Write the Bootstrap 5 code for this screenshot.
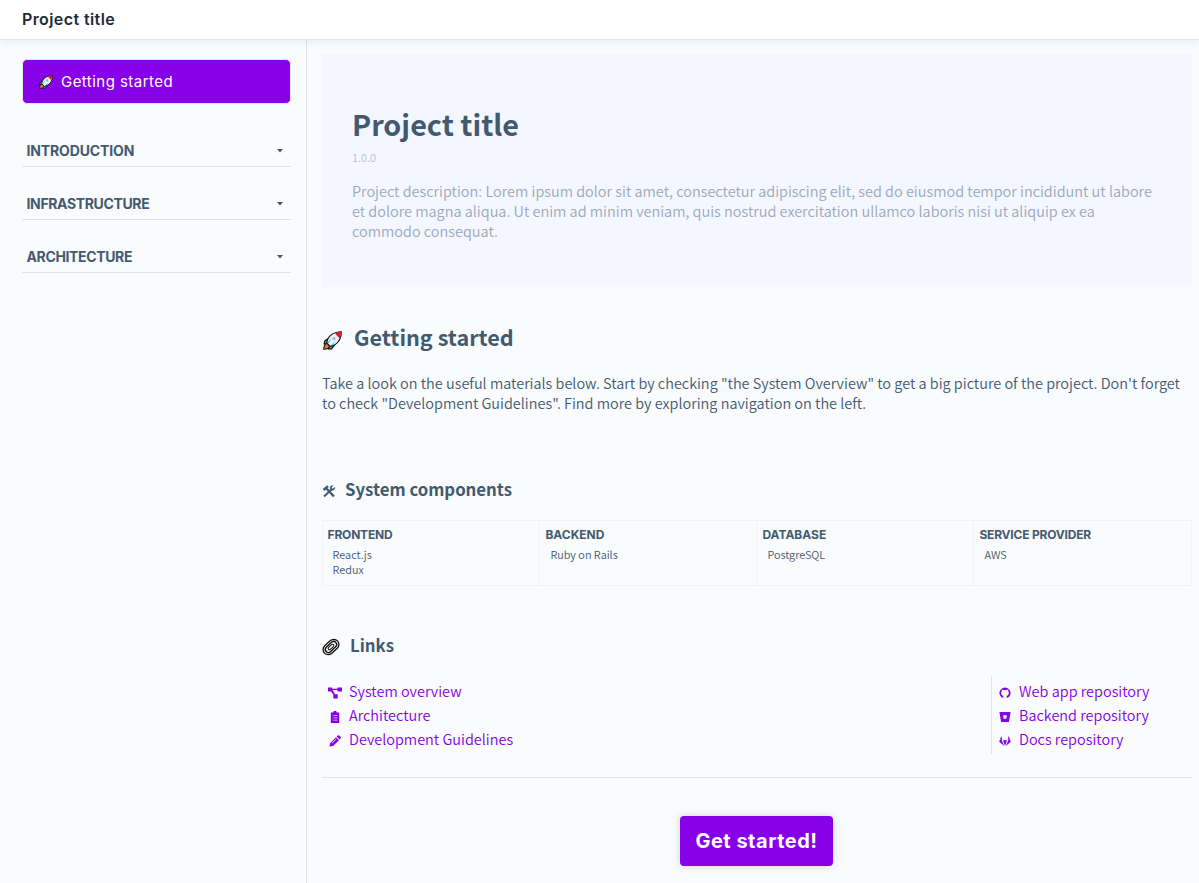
<!DOCTYPE html>
<html lang="en">
<head>
<meta charset="utf-8">
<meta name="viewport" content="width=device-width, initial-scale=1">
<title>Project title</title>
<link href="https://cdn.jsdelivr.net/npm/bootstrap@5.3.0/dist/css/bootstrap.min.css" rel="stylesheet">
<style>
:root{--ink:#425a70;--violet:#8600e8;--line:#dde3eb}
body{font-family:"Noto Sans CJK JP","Open Sans",sans-serif;font-size:14.48px;font-weight:350;line-height:20px;color:var(--ink);background:#fafbfd;height:883px;overflow:hidden}
.topbar{height:40px;background:#fff;border-bottom:1px solid #dfe3e8;box-shadow:0 1px 8px rgba(60,70,90,.1);padding:0 22px;position:relative;z-index:2}
.display-font{font-family:Inter,"Noto Sans",sans-serif}
.brand-name{font-size:16px;font-weight:600;color:#1d2c3c;line-height:38px;letter-spacing:.4px}
.page-body{height:843px}
.sidebar{width:307px;border-right:1px solid #d8e0e9;padding:19px 15px 0 22px}
.start-link{height:45px;border:1px solid #e3e3f4;border-radius:5px;background:var(--violet);color:#fff;font-size:15px;font-weight:400;letter-spacing:.46px;padding:0 15px;gap:8px}
.section-nav{margin-top:36px}
.section-row{height:27px;margin-bottom:26px;border-bottom:1px solid var(--line);padding:0 8px 5px 4.5px;font-size:14px;font-weight:700;line-height:20px;letter-spacing:-.36px}
.section-row:first-child{letter-spacing:-.14px}
.main-area{min-width:0;padding:14px 7px 0 15px}
.hero{height:233px;background:#f4f7ff;padding:50px 30px 0}
.hero h1{font-size:28.75px;font-weight:700;line-height:40px;margin:0}
.version{font-size:11px;line-height:16px;color:#b6c0ce;margin:5px 0 16px}
.hero .summary{color:#9ba9b9;margin:0}
h2,h3{font-weight:700;margin:0}
h2{font-size:21.6px;line-height:30px;margin-top:35px;gap:10px}
h3{font-size:16.75px;line-height:24px}
.lead-in{margin:21px 0 0}
.parts-title{margin-top:64px;gap:9px}
.links-title{margin-top:47px;gap:10px}
.title-icon{margin-top:3px}
.stack-grid{border:1px solid #f0f2f7;margin-top:19px!important}
.stack-grid>div{height:64px;padding:6px 5px 0 4.6px;line-height:15px;font-size:10.87px}
.stack-grid>div:not(:last-child){border-right:1px solid #f0f2f7}
.stack-grid>div+div{padding-left:5.4px}
.stack-grid b{display:block;font-size:12px;line-height:16px;margin-bottom:4px}
.stack-grid .tight{letter-spacing:-.2px}
.stack-grid span{display:block;padding-left:5px}
.link-cols{margin-top:19px}
.link-list{padding:2.5px 0 0 6px}
.link-list a{display:flex;align-items:center;height:24px;color:var(--violet);text-decoration:none}
.link-list svg{fill:currentColor;margin:4px 7px 0 0}
.repo-links{width:201px;height:78px;border-left:1px solid var(--line);padding-left:7px}
.repo-links svg{margin-right:8px}
.divider{margin-top:23px;border-top:1px solid var(--line)}
.cta-row{padding-right:2px}
.cta{width:153px;height:50px;margin-top:38px;border:0;border-radius:4px;background:var(--violet);color:#fff;font-size:20px;font-weight:700;letter-spacing:.5px;box-shadow:0 0 9px rgba(50,60,90,.2);padding:0 0 0 1px}
</style>
</head>
<body>
<svg width="0" height="0" class="position-absolute" aria-hidden="true">
<symbol id="rocket" viewBox="0 0 20 20">
<path d="M6.5 7L2 10.3 1.2 13.5 5 14zM13 13.5L9 18.8 5.8 18.8 6 14z" fill="#19b8e8" stroke="#111" stroke-width="1.3"/>
<path d="M4.4 13.2C2 13.2 1 15.8.8 19.2 4 19.2 6.8 18 7 15.6z" fill="#f47b20" stroke="#111" stroke-width="1.2"/>
<path d="M4 12.5C4.6 6 10 1 19.2.8 19.4 9.5 14.4 15 7.4 16.2z" fill="#eef3f7" stroke="#111" stroke-width="1.2"/>
<path d="M12.7 2.5C14.8 1.5 17 1.3 18.8 1.2 18.8 3.4 18.4 5.5 17.4 7.6z" fill="#e81224"/>
<path d="M8.3 15L14 10.5 11 14.3zM4.8 12L9 7.5 6.2 13z" fill="#28c7f0"/>
<circle cx="11.6" cy="8" r="1.8" fill="#a7b5c2"/>
</symbol>
<symbol id="caret" viewBox="0 0 6 4"><path d="M0 0H6L3 3.5z" fill="#425a70"/></symbol>
</svg>
<header class="topbar"><div class="brand-name display-font">Project title</div></header>
<div class="page-body d-flex">
<aside class="sidebar flex-shrink-0">
<a class="start-link display-font d-flex align-items-center text-decoration-none" href="#"><svg width="15" height="15"><use href="#rocket" width="14" height="14" x="1" y="1"/></svg><span>Getting started</span></a>
<nav class="section-nav display-font">
<div class="section-row d-flex align-items-center justify-content-between"><span>INTRODUCTION</span><svg width="6" height="4"><use href="#caret"/></svg></div>
<div class="section-row d-flex align-items-center justify-content-between"><span>INFRASTRUCTURE</span><svg width="6" height="4"><use href="#caret"/></svg></div>
<div class="section-row d-flex align-items-center justify-content-between"><span>ARCHITECTURE</span><svg width="6" height="4"><use href="#caret"/></svg></div>
</nav>
</aside>
<main class="main-area flex-grow-1">
<section class="hero">
<h1>Project title</h1>
<p class="version">1.0.0</p>
<p class="summary">Project description: Lorem ipsum dolor sit amet, consectetur adipiscing elit, sed do eiusmod tempor incididunt ut labore et dolore magna aliqua. Ut enim ad minim veniam, quis nostrud exercitation ullamco laboris nisi ut aliquip ex ea commodo consequat.</p>
</section>
<h2 class="d-flex align-items-center"><svg class="title-icon" width="22" height="22"><use href="#rocket" width="19" height="19" x="1" y="3"/></svg><span>Getting started</span></h2>
<p class="lead-in">Take a look on the useful materials below. Start by checking "the System Overview" to get a big picture of the project. Don't forget to check "Development Guidelines". Find more by exploring navigation on the left.</p>
<h3 class="parts-title d-flex align-items-center"><svg class="title-icon" width="14" height="14" viewBox="0 0 14 14" fill="none" stroke="#425a70"><path d="M4.5 4.5L12 12.5M1.5 6L6 2.2" stroke-width="2.4"/><path d="M2 12.5L10 5" stroke-width="2"/><path d="M12.8 3.5L10.5 5 9.4 3.8 10.7 1.5C8 1.7 7.6 4.2 8.8 5.7 10.4 6.8 12.9 6 12.8 3.5z" fill="#425a70" stroke-width=".6"/></svg><span>System components</span></h3>
<div class="stack-grid row g-0">
<div class="col-3"><b class="display-font tight">FRONTEND</b><span>React.js</span><span>Redux</span></div>
<div class="col-3"><b class="display-font">BACKEND</b><span>Ruby on Rails</span></div>
<div class="col-3"><b class="display-font">DATABASE</b><span>PostgreSQL</span></div>
<div class="col-3"><b class="display-font tight">SERVICE PROVIDER</b><span>AWS</span></div>
</div>
<h3 class="links-title d-flex align-items-center"><svg class="title-icon" width="18" height="18" viewBox="0 0 18 18" fill="none" stroke="#111"><g transform="rotate(-43 9 9)"><rect x=".1" y="3.8" width="17.8" height="10.4" rx="5.2" fill="#fff" stroke-width="1.3"/><rect x="2.4" y="6" width="13.2" height="6" rx="3" stroke-width="1.4"/><rect x="5.6" y="7.7" width="6.8" height="2.6" rx="1.3" stroke-width="1"/></g></svg><span>Links</span></h3>
<div class="link-cols d-flex justify-content-between">
<div class="link-list">
<a href="#"><svg width="14" height="12" viewBox="0 0 14 12"><path d="M0 .5h4.2v1.2h5.3V.5H14v4H9.5V3H4.6L7 7.3H9.7v4.2H5.3V7.6L3 4.5H0z"/></svg><span>System overview</span></a>
<a href="#"><svg width="14" height="12" viewBox="0 0 14 12"><path fill-rule="evenodd" d="M2.8 1.5h2.5a1.7 1.7 0 013.4 0h2.5V12H2.8zM4.7 5h.9v-.8h-.9zM6.3 5h3v-.8h-3zM4.7 7.3h.9v-.8h-.9zM6.3 7.3h3v-.8h-3zM4.7 9.6h.9v-.8h-.9zM6.3 9.6h3v-.8h-3z"/></svg><span>Architecture</span></a>
<a href="#"><svg width="14" height="12" viewBox="0 0 14 12"><path fill-rule="evenodd" d="M1.5 11.5L2.2 8 8 2.3 11 5.2 5 11zM8.7 1.6L9.8.5Q10.6-.1 11.3.6L12.6 1.9Q13.2 2.7 12.6 3.4L11.6 4.5zM4 8.4L8.5 4 8 3.7 3.6 8z"/></svg><span>Development Guidelines</span></a>
</div>
<div class="link-list repo-links">
<a href="#"><svg width="12" height="12" viewBox="0 0 12 12"><path d="M4.3 11.1V8.8C2.8 8.5 2.2 7.5 2.2 5.8 2.2 5 2.4 4.4 2.8 3.9L2.8 2.5 4.3 3.1Q6 2.7 7.7 3.1L9.2 2.5 9.2 3.9C9.6 4.4 9.8 5 9.8 5.8 9.8 7.5 9.2 8.5 7.7 8.8V11.1C10.2 10.5 11.6 8.4 11.6 6.1A5.6 5.6 0 10.4 6.1C.4 8.4 1.9 10.4 4.3 11.1z"/></svg><span>Web app repository</span></a>
<a href="#"><svg width="12" height="12" viewBox="0 0 12 12"><path fill-rule="evenodd" d="M.4 1H11.6L9.9 11H2.1zM4.1 4.2L4.7 7.7H7.3L7.9 4.2z"/></svg><span>Backend repository</span></a>
<a href="#"><svg width="12" height="12" viewBox="0 0 12 12"><path d="M2.2 1L3.4 4.7H1zM9.8 1L11 4.7H8.6zM.8 5L.2 6.8 5.2 11 2.6 5zM11.2 5L11.8 6.8 6.8 11 9.4 5zM4 5.2H8L6 11z"/></svg><span>Docs repository</span></a>
</div>
</div>
<div class="divider"></div>
<div class="cta-row text-center"><button class="cta display-font">Get started!</button></div>
</main>
</div>
<script src="https://cdn.jsdelivr.net/npm/bootstrap@5.3.0/dist/js/bootstrap.bundle.min.js"></script>
</body>
</html>
